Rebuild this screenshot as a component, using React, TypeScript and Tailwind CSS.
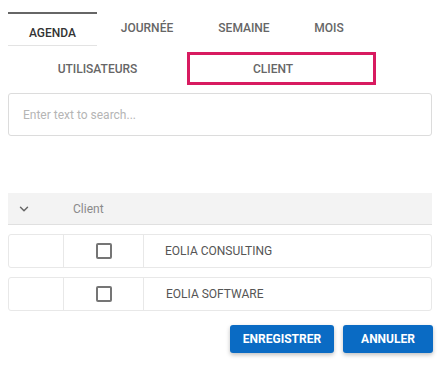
import { ChevronDown } from "lucide-react";

const tabs = [
  { label: "AGENDA", w: "w-[89px]", active: true },
  { label: "JOURNÉE", w: "w-[100px]", active: false },
  { label: "SEMAINE", w: "w-[94px]", active: false },
  { label: "MOIS", w: "w-[76px]", active: false },
];

const clients = ["EOLIA CONSULTING", "EOLIA SOFTWARE"];

export default function App() {
  return (
    <div className="h-[366px] w-[448px] bg-white pl-2 pr-4 pt-3 font-['Roboto',sans-serif]">
      <div className="flex h-[34px]">
        {tabs.map((t) =>
          t.active ? (
            <div
              key={t.label}
              className={`${t.w} flex items-start justify-center border-t-2 border-b border-t-[#666] border-b-[#e3e3e3] pt-[10px] text-[12px] font-medium text-[#333]`}
            >
              {t.label}
            </div>
          ) : (
            <div
              key={t.label}
              className={`${t.w} flex items-start justify-center pt-[7px] text-[12px] font-medium text-[#666]`}
            >
              {t.label}
            </div>
          )
        )}
      </div>

      <div className="mt-[6px] flex h-[33px]">
        <div className="flex w-[179px] items-center justify-center text-[12px] font-medium text-[#666]">
          UTILISATEURS
        </div>
        <div className="flex w-[189px] items-center border-[3px] border-[#d81b60] pl-[63px] text-[12px] font-medium text-[#666]">
          CLIENT
        </div>
      </div>

      <div className="mt-2 flex h-[43px] items-center rounded-[3px] border border-[#dcdcdc] px-[14px] text-[12px] text-[#b5b5b5]">
        Enter text to search...
      </div>

      <div className="mt-[57px] flex h-[32px] items-center border-b border-[#e0e0e0] bg-[#f3f3f3] text-[12px] text-[#8a8a8a]">
        <div className="flex w-[55px] items-center pl-[9px]">
          <ChevronDown size={14} strokeWidth={2.5} className="text-[#666]" />
        </div>
        <span className="pl-[10px]">Client</span>
      </div>

      <div className="mt-[9px] flex flex-col gap-[9px]">
        {clients.map((c, i) => (
          <div
            key={c}
            className="flex h-[34px] rounded-[3px] border border-[#e8e8e8] text-[12px] text-[#555]"
          >
            <div className="w-[55px] border-r border-[#e8e8e8]" />
            <div className="flex w-[80px] items-center justify-center border-r border-[#e8e8e8]">
              <div className="h-4 w-4 rounded-[2px] border-2 border-[#757575]" />
            </div>
            <div className={`flex items-center ${i === 0 ? "pl-[21px]" : "pl-[22px]"}`}>
              {c}
            </div>
          </div>
        ))}
      </div>

      <div className="mr-[-1px] mt-[14px] flex justify-end gap-[9px]">
        <button className="h-[28px] w-[104px] rounded-[3px] bg-[#0a6bc4] text-[12px] font-bold text-white shadow-[0_2px_4px_rgba(0,0,0,0.25)]">
          ENREGISTRER
        </button>
        <button className="h-[28px] w-[90px] rounded-[3px] bg-[#0a6bc4] text-[12px] font-bold text-white shadow-[0_2px_4px_rgba(0,0,0,0.25)]">
          ANNULER
        </button>
      </div>
    </div>
  );
}
